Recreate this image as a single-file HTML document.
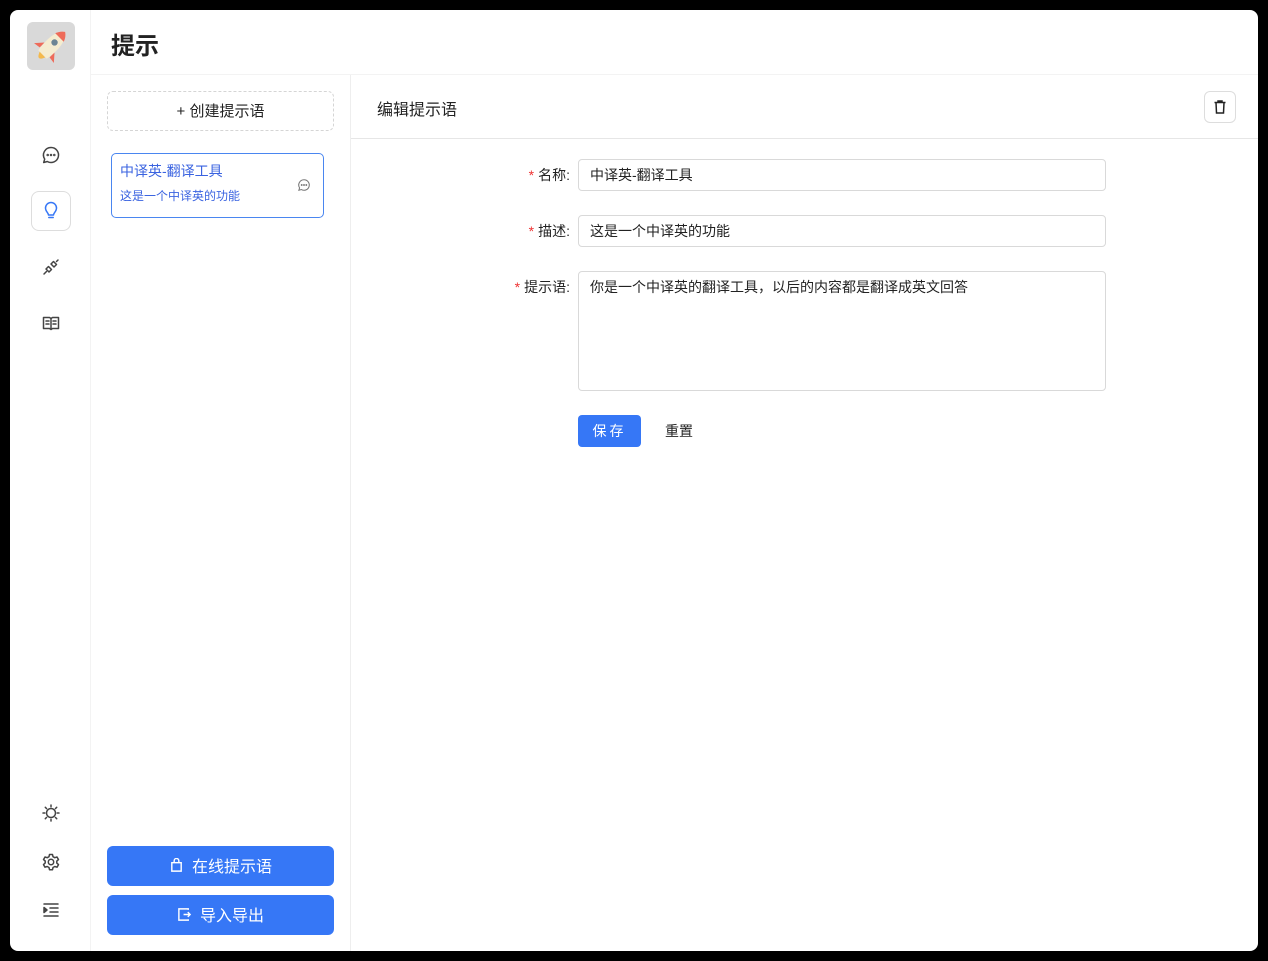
<!DOCTYPE html>
<html><head><meta charset="utf-8"><style>
*{box-sizing:border-box;margin:0;padding:0}
body{width:1268px;height:961px;background:#000;font-family:"Liberation Sans","Noto Sans CJK SC",sans-serif;position:relative;overflow:hidden;color:#222}
.win{position:absolute;left:10px;top:10px;width:1248px;height:941px;background:#fff;border-radius:8px;overflow:hidden}
.side{position:absolute;left:0;top:0;width:81px;height:941px;border-right:1px solid #f3f3f3}
.logo{position:absolute;left:17px;top:12px;width:48px;height:48px;background:#d9d9d9;border-radius:6px}
.ic{position:absolute;left:21px;width:40px;height:40px;display:flex;align-items:center;justify-content:center}
.ic svg{width:20px;height:20px;fill:none;stroke:#444;stroke-width:1.5;stroke-linecap:round;stroke-linejoin:round}
.act{border:1px solid #ddd;border-radius:8px}
.act svg{stroke:#3677f6}
h1{position:absolute;left:101px;top:16px;font-size:24px;font-weight:bold;color:#222}
.hline{position:absolute;left:81px;top:64px;width:1167px;height:1px;background:#f3f3f3}
.list{position:absolute;left:81px;top:65px;width:260px;height:876px;border-right:1px solid #eee}
.create{position:absolute;left:16px;top:16px;width:227px;height:40px;border:1px dashed #d5d5d5;border-radius:6px;text-align:center;line-height:39px;font-size:15px;color:#222}
.card{position:absolute;left:20px;top:78px;width:213px;height:65px;border:1px solid #4a86f0;border-radius:5px;color:#3a63e0}
.card .t{position:absolute;left:8px;top:7px;font-size:14px}
.card .d{position:absolute;left:8px;top:33px;font-size:12px}
.btn{position:absolute;left:16px;width:227px;height:40px;background:#3677f6;border-radius:6px;color:#fff;font-size:16px;display:flex;align-items:center;justify-content:center;gap:8px;padding-bottom:2px}
.btn svg{width:15px;height:15px;fill:none;stroke:#fff;stroke-width:1.5}
.ehead{position:absolute;left:341px;top:65px;width:907px;height:64px;border-bottom:1px solid #e6e6e6}
.ehead span{position:absolute;left:26px;top:21px;font-size:16px}
.del{position:absolute;right:22px;top:16px;width:32px;height:32px;border:1px solid #ddd;border-radius:6px;display:flex;align-items:center;justify-content:center}
.lbl{position:absolute;font-size:14px;text-align:right;width:100px}
.lbl b{color:#e33;font-weight:normal;margin-right:4px}
.inp{position:absolute;left:568px;width:528px;height:32px;border:1px solid #d9d9d9;border-radius:4px;padding:0 11px;font-size:14px;line-height:30px}
.save{position:absolute;left:568px;top:405px;width:63px;height:32px;background:#3677f6;border-radius:4px;color:#fff;font-size:14px;text-align:center;line-height:32px;letter-spacing:3px}
.reset{position:absolute;left:655px;top:411px;font-size:14px}
</style></head><body>
<div class="win">
 <div class="side">
  <div class="logo"><svg width="48" height="48" viewBox="0 0 48 48">
   <g transform="rotate(45 24 24)">
    <path d="M17 26 L10 34 L17 33 Z" fill="#ee6b5a"/>
    <path d="M31 26 L38 34 L31 33 Z" fill="#ee6b5a"/>
    <path d="M20 36 Q24 46 28 36 Z" fill="#f4b94d"/>
    <path d="M24 4 C32 10 32 24 30 36 H18 C16 24 16 10 24 4 Z" fill="#f5ecd0"/>
    <path d="M24 4 C27 6 29 9 30 12 H18 C19 9 21 6 24 4 Z" fill="#ee6b5a"/>
    <circle cx="24" cy="19" r="3.2" fill="#6d8594"/>
   </g></svg></div>
  <div class="ic" style="top:125px"><svg viewBox="0 0 20 20"><path d="M10 2.5a7.5 7.5 0 1 1-3.7 14L2.7 17.5l1-3.4A7.5 7.5 0 0 1 10 2.5z"/><circle cx="6.7" cy="10" r=".5"/><circle cx="10" cy="10" r=".5"/><circle cx="13.3" cy="10" r=".5"/></svg></div>
  <div class="ic act" style="top:181px"><svg viewBox="0 0 20 20"><path d="M7.5 14c0-2-3-3.5-3-7a5.5 5.5 0 0 1 11 0c0 3.5-3 5-3 7z"/><path d="M7.8 16.5h4.4"/></svg></div>
  <div class="ic" style="top:237px"><svg viewBox="0 0 20 20"><path d="M3 17l2.5-2.5"/><path d="M5 12l3 3 2.5-2.5-3-3z"/><path d="M10 7l3 3 2.5-2.5-3-3z"/><path d="M15.5 4.5L17 3"/></svg></div>
  <div class="ic" style="top:293px"><svg viewBox="0 0 20 20"><path d="M2.5 4.5h6l1.5 1 1.5-1h6v11h-6l-1.5 1-1.5-1h-6z"/><path d="M10 5.5v10M5 8h3M5 11h3M12 8h3M12 11h3"/></svg></div>
  <div class="ic" style="top:783px"><svg viewBox="0 0 20 20"><circle cx="10" cy="10" r="4.5"/><path d="M10 2v1.8M10 16.2V18M2 10h1.8M16.2 10H18M4.3 4.3l1.3 1.3M14.4 14.4l1.3 1.3M4.3 15.7l1.3-1.3M14.4 5.6l1.3-1.3"/></svg></div>
  <div class="ic" style="top:832px"><svg viewBox="0 0 20 20"><circle cx="10" cy="10" r="2.7"/><path d="M8.5 2.5h3l.5 2.2 1.8 1 2.2-.7 1.5 2.6-1.7 1.5v2l1.7 1.5-1.5 2.6-2.2-.7-1.8 1-.5 2.2h-3l-.5-2.2-1.8-1-2.2.7-1.5-2.6L4.2 11V9L2.5 7.6 4 5l2.2.7 1.8-1z"/></svg></div>
  <div class="ic" style="top:880px"><svg viewBox="0 0 20 20"><path d="M3 4h14M9 8h8M9 12h8M3 16h14"/><path d="M3 7.5l3 2.5-3 2.5z" fill="#444"/></svg></div>
 </div>
 <h1>提示</h1>
 <div class="hline"></div>
 <div class="list">
  <div class="create">+ 创建提示语</div>
  <div class="card"><div class="t">中译英-翻译工具</div><div class="d">这是一个中译英的功能</div>
   <svg style="position:absolute;left:185px;top:24px" width="14" height="14" viewBox="0 0 20 20" fill="none" stroke="#777" stroke-width="1.5"><path d="M10 2.5a7.5 7.5 0 1 1-3.7 14L2.7 17.5l1-3.4A7.5 7.5 0 0 1 10 2.5z"/><circle cx="6.7" cy="10" r=".6"/><circle cx="10" cy="10" r=".6"/><circle cx="13.3" cy="10" r=".6"/></svg></div>
  <div class="btn" style="top:771px"><svg viewBox="0 0 16 16"><path d="M3 5h10v9H3zM5.5 5V3a2.5 2.5 0 0 1 5 0v2"/></svg>在线提示语</div>
  <div class="btn" style="top:820px"><svg viewBox="0 0 16 16"><path d="M12 3V2H2v12h10v-1M7 8h7M11.5 5.5L14 8l-2.5 2.5"/></svg>导入导出</div>
 </div>
 <div class="ehead"><span>编辑提示语</span>
  <div class="del"><svg width="16" height="16" viewBox="0 0 16 16" fill="none" stroke="#222" stroke-width="1.5"><path d="M2.5 3.5h11M6 3.5V2h4v1.5M4 3.5l.5 10.5h7l.5-10.5"/></svg></div></div>
 <div class="lbl" style="left:460px;top:155px"><b>*</b>名称:</div>
 <div class="inp" style="top:149px">中译英-翻译工具</div>
 <div class="lbl" style="left:460px;top:211px"><b>*</b>描述:</div>
 <div class="inp" style="top:205px">这是一个中译英的功能</div>
 <div class="lbl" style="left:460px;top:267px"><b>*</b>提示语:</div>
 <div class="inp" style="top:261px;height:120px;line-height:30px">你是一个中译英的翻译工具，以后的内容都是翻译成英文回答</div>
 <div class="save">保存</div>
 <div class="reset">重置</div>
</div>
</body></html>
